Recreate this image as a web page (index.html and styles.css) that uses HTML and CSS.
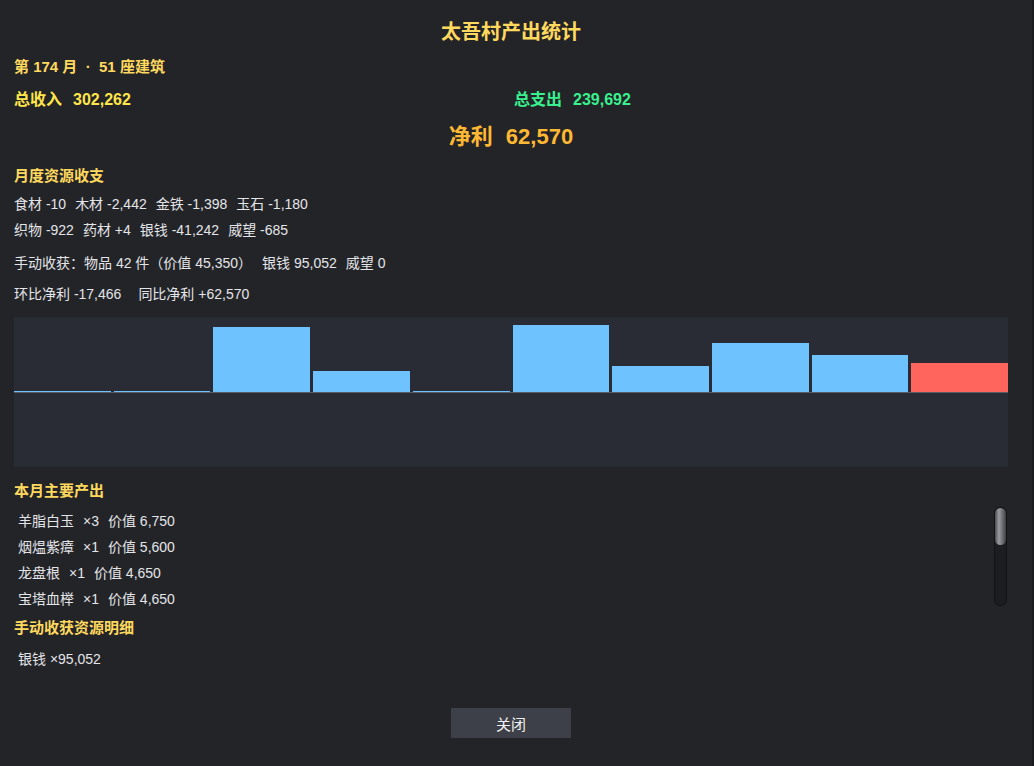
FILE: index.html
```html
<!DOCTYPE html>
<html lang="zh-CN">
<head>
  <meta charset="UTF-8">
  <title>太吾村产出统计</title>
  <link rel="stylesheet" href="styles.css">
</head>
<body>
  <div class="panel">
    <h1 class="title">太吾村产出统计</h1>
    <div class="meta">第 174 月 &nbsp;·&nbsp; 51 座建筑</div>

    <div class="totals">
      <div class="income"><span>总收入</span><span class="num">302,262</span></div>
      <div class="expense"><span>总支出</span><span class="num">239,692</span></div>
    </div>
    <div class="net"><span>净利</span><span class="num">62,570</span></div>

    <h2 class="section">月度资源收支</h2>
    <div class="line first">
      <span>食材 -10</span><span>木材 -2,442</span><span>金铁 -1,398</span><span>玉石 -1,180</span>
    </div>
    <div class="line">
      <span>织物 -922</span><span>药材 +4</span><span>银钱 -41,242</span><span>威望 -685</span>
    </div>
    <div class="line gap">
      <span class="paren">手动收获：物品 42 件（价值 45,350）</span><span>银钱 95,052</span><span>威望 0</span>
    </div>
    <div class="line gap-sm">
      <span class="wide">环比净利 -17,466</span><span>同比净利 +62,570</span>
    </div>

    <div class="chart">
      <div class="col"><div class="pos"><div class="bar" style="height:1px"></div></div></div>
      <div class="col"><div class="pos"><div class="bar" style="height:1px"></div></div></div>
      <div class="col"><div class="pos"><div class="bar" style="height:65px"></div></div></div>
      <div class="col"><div class="pos"><div class="bar" style="height:21px"></div></div></div>
      <div class="col"><div class="pos"><div class="bar" style="height:1px"></div></div></div>
      <div class="col"><div class="pos"><div class="bar" style="height:67px"></div></div></div>
      <div class="col"><div class="pos"><div class="bar" style="height:26px"></div></div></div>
      <div class="col"><div class="pos"><div class="bar" style="height:49px"></div></div></div>
      <div class="col"><div class="pos"><div class="bar" style="height:37px"></div></div></div>
      <div class="col"><div class="pos"><div class="bar current" style="height:29px"></div></div></div>
    </div>

    <h2 class="section after-chart">本月主要产出</h2>
    <div class="scroll">
      <ul class="items">
        <li><span>羊脂白玉</span><span>×3</span><span>价值 6,750</span></li>
        <li><span>烟煴紫瘴</span><span>×1</span><span>价值 5,600</span></li>
        <li><span>龙盘根</span><span>×1</span><span>价值 4,650</span></li>
        <li><span>宝塔血榉</span><span>×1</span><span>价值 4,650</span></li>
      </ul>
      <div class="track"><div class="thumb"></div></div>
    </div>

    <h2 class="section after-list">手动收获资源明细</h2>
    <ul class="items detail">
      <li><span>银钱 ×95,052</span></li>
    </ul>

    <div class="actions">
      <button class="close">关闭</button>
    </div>
  </div>
</body>
</html>
```

FILE: styles.css
```css
body {
  margin: 0;
  width: 1034px;
  height: 766px;
  overflow: hidden;
  background-color: #232428;
  color: #e4e5e8;
  font-family: "Liberation Sans", "Noto Sans CJK SC", sans-serif;
  font-size: 14px;
}

.panel {
  height: 766px;
  padding: 19px 24px 0 14px;
  box-sizing: border-box;
  border-right: 2px solid #1a1b1e;
}

.title {
  margin: 0;
  text-align: center;
  font-size: 20px;
  line-height: 26px;
  color: #ffd95e;
}

.meta {
  margin-top: 12px;
  font-size: 15px;
  font-weight: bold;
  line-height: 20px;
  color: #ffd95e;
}

.totals {
  display: grid;
  grid-template-columns: 500px 1fr;
  margin-top: 12px;
  font-size: 16px;
  font-weight: bold;
  line-height: 22px;
}

.totals .num { margin-left: 11px; }

.income { color: #ffe64a; }
.expense { color: #3af08e; }

.net {
  margin-top: 12px;
  text-align: center;
  font-size: 22px;
  font-weight: bold;
  line-height: 28px;
  color: #ffb833;
}

.net .num { margin-left: 13px; }

.section {
  margin: 15px 0 0;
  font-size: 15px;
  line-height: 20px;
  color: #ffd95e;
}

.line {
  line-height: 26px;
  white-space: nowrap;
}

.line.first { margin-top: 5px; }
.line.gap { margin-top: 7px; }
.line.gap-sm { margin-top: 5px; }

.line span { margin-right: 9px; }
.line span.wide { margin-right: 17px; }
.line span.paren { margin-right: 10px; }

/* monthly net chart, baseline in the middle */
.chart {
  position: relative;
  display: flex;
  gap: 3px;
  height: 150px;
  margin-top: 10px;
  background-color: #292c35;
}

.chart::after {
  content: "";
  position: absolute;
  left: 0;
  right: 0;
  top: 75px;
  height: 1px;
  background-color: #575c66;
}

.col {
  flex: 1;
}

.pos {
  display: flex;
  align-items: flex-end;
  height: 75px;
}

.bar {
  width: 100%;
  background-color: #6ec3ff;
}

.bar.current { background-color: #ff655d; }

.section.after-chart { margin-top: 14px; }
.section.after-list { margin-top: 11px; }

.scroll {
  display: flex;
  height: 100px;
  margin-top: 6px;
  overflow: hidden;
}

.items {
  flex: 1;
  margin: 0;
  padding: 1px 0 0 4px;
  list-style: none;
}

.items li {
  line-height: 26px;
  white-space: nowrap;
}

.items li span { margin-right: 9px; }

.track {
  width: 11px;
  height: 97px;
  margin-right: 1px;
  border: 1px solid #121316;
  border-radius: 6px;
  background-color: #1c1d21;
}

.thumb {
  height: 37px;
  border-radius: 6px;
  background: linear-gradient(to right, #4a4b4f, #9a9ba0 35%, #6a6b70 70%, #3e3f43);
}

.items.detail {
  margin-top: 7px;
}

.actions {
  display: flex;
  justify-content: center;
  margin-top: 36px;
}

.close {
  width: 120px;
  height: 30px;
  border: none;
  background-color: #3d4048;
  color: #f2f2f2;
  font-family: "Liberation Sans", "Noto Sans CJK SC", sans-serif;
  font-size: 15px;
}
```
